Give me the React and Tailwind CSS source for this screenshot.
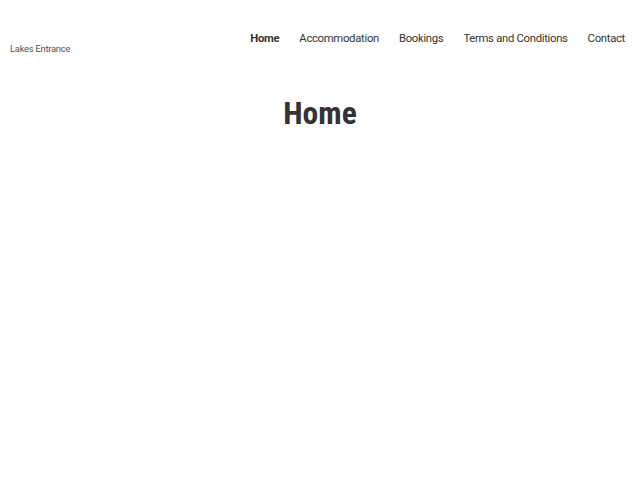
import React from 'react'

const links = ['Home', 'Accommodation', 'Bookings', 'Terms and Conditions', 'Contact']

const Header = () => (
  <header className="flex items-start justify-between pl-[10px] pr-[15px] pt-[30px]">
    <div className="pt-[13px] text-[9.4px] leading-[12px] tracking-[-0.25px] text-[#555]">Lakes Entrance</div>
    <nav className="mt-[1px] flex gap-[20px] text-[11.3px] leading-[16px] tracking-[-0.3px] text-[#333]">
      {links.map((link, i) => (
        <a key={link} href="#" className={i === 0 ? 'font-bold' : ''}>
          {link}
        </a>
      ))}
    </nav>
  </header>
)

export default function App() {
  return (
    <div className="min-h-screen bg-white" style={{ fontFamily: 'Roboto, "Liberation Sans", sans-serif' }}>
      <Header />
      <main className="pt-[40px]">
        <h1 className="text-center text-[31.5px] leading-[38px] font-bold text-[#333] [font-stretch:condensed]">
          Home
        </h1>
      </main>
    </div>
  )
}
